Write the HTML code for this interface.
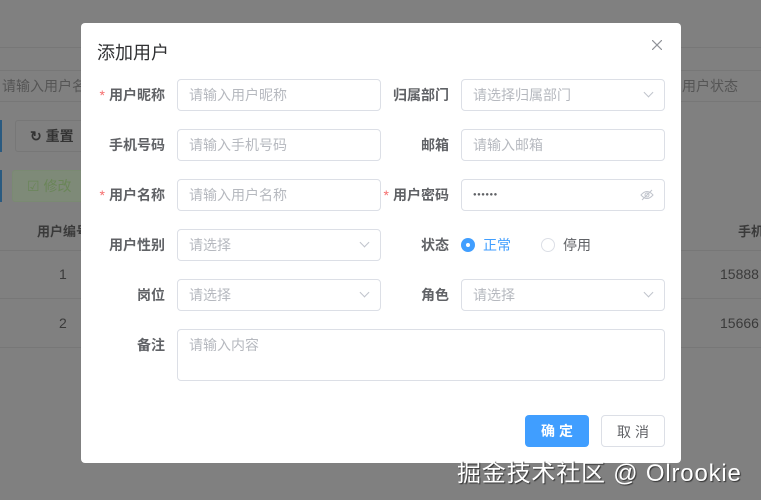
<!DOCTYPE html>
<html><head><meta charset="utf-8"><style>
*{box-sizing:border-box;margin:0;padding:0}
body{width:761px;height:500px;overflow:hidden;background:#808080;font-family:"Liberation Sans","Noto Sans CJK SC",sans-serif;position:relative;font-size:14px}
.a{position:absolute;white-space:nowrap}
.bg{color:#3a3a3a}
.dlg{position:absolute;left:81px;top:23px;width:600px;height:440px;background:#fff;border-radius:4px}
.ttl{position:absolute;left:16px;top:16px;font-size:18px;color:#303133}
.lb{position:absolute;width:90px;text-align:right;font-weight:bold;color:#606266;font-size:14px;line-height:32px}
.lb i{color:#f56c6c;font-style:normal;font-weight:normal;margin-right:4px}
.in{position:absolute;height:32px;border:1px solid #dcdfe6;border-radius:4px;color:#b6b9bf;padding-left:11px;line-height:30px;font-size:14px}
.ar{position:absolute;right:12px;top:9px;width:7px;height:7px;border-right:1px solid #c0c4cc;border-bottom:1px solid #c0c4cc;transform:rotate(45deg)}
.btn{position:absolute;top:392px;width:64px;height:32px;border-radius:4px;text-align:center;line-height:32px;font-size:14px;letter-spacing:4px;padding-left:4px}
</style></head><body>
<div class="a" style="left:0;top:47px;width:761px;height:1px;background:#777"></div>
<div class="a" style="left:0;top:70px;width:90px;height:32px;border:1px solid #777;border-left:none;color:#555;line-height:30px;padding-left:2px;overflow:hidden">请输入用户名</div>
<div class="a" style="left:680px;top:70px;width:81px;height:32px;border-top:1px solid #777;border-bottom:1px solid #777;color:#555;line-height:30px;padding-left:2px">用户状态</div>
<div class="a" style="left:0;top:120px;width:2px;height:32px;background:#2a5a80"></div>
<div class="a" style="left:15px;top:120px;width:70px;height:32px;border:1px solid #777;border-radius:3px;color:#333;line-height:30px;padding-left:14px;font-weight:bold">↻ 重置</div>
<div class="a" style="left:0;top:170px;width:2px;height:32px;background:#2a5a80"></div>
<div class="a" style="left:12px;top:170px;width:72px;height:32px;background:#7e8a78;border:1px solid #7a8a72;border-radius:3px;color:#6a8558;line-height:30px;padding-left:14px">☑ 修改</div>
<div class="a bg" style="left:37px;top:221px;font-weight:bold;font-size:13px">用户编号</div>
<div class="a bg" style="left:738px;top:221px;font-weight:bold;font-size:13px">手机</div>
<div class="a" style="left:0;top:250px;width:761px;height:1px;background:#777"></div>
<div class="a bg" style="left:59px;top:266px">1</div>
<div class="a bg" style="left:720px;top:266px">15888</div>
<div class="a" style="left:0;top:298px;width:761px;height:1px;background:#777"></div>
<div class="a bg" style="left:59px;top:315px">2</div>
<div class="a bg" style="left:720px;top:315px">15666</div>
<div class="a" style="left:0;top:347px;width:761px;height:1px;background:#777"></div>

<div class="dlg">
<div class="ttl">添加用户</div>
<svg class="a" style="left:571px;top:17px" width="10" height="10" viewBox="0 0 10 10"><path d="M0 0L10 10M10 0L0 10" stroke="#909399" stroke-width="1.2"/></svg>
<div class="lb" style="left:-6px;top:56px"><i>*</i>用户昵称</div>
<div class="in" style="left:96px;top:56px;width:204px">请输入用户昵称</div>
<div class="lb" style="left:278px;top:56px">归属部门</div>
<div class="in" style="left:380px;top:56px;width:204px">请选择归属部门<span class="ar"></span></div>

<div class="lb" style="left:-6px;top:106px">手机号码</div>
<div class="in" style="left:96px;top:106px;width:204px">请输入手机号码</div>
<div class="lb" style="left:278px;top:106px">邮箱</div>
<div class="in" style="left:380px;top:106px;width:204px">请输入邮箱</div>

<div class="lb" style="left:-6px;top:156px"><i>*</i>用户名称</div>
<div class="in" style="left:96px;top:156px;width:204px">请输入用户名称</div>
<div class="lb" style="left:278px;top:156px"><i>*</i>用户密码</div>
<div class="in" style="left:380px;top:156px;width:204px;color:#606266;font-size:6px;letter-spacing:0.5px">●●●●●●<svg style="position:absolute;right:10px;top:9px" width="14" height="12" viewBox="0 0 14 12"><path d="M1 6Q7 -1 13 6Q7 13 1 6Z" fill="none" stroke="#c0c4cc"/><circle cx="7" cy="6" r="2" fill="none" stroke="#c0c4cc"/><path d="M2 11L12 1" stroke="#c0c4cc"/></svg></div>

<div class="lb" style="left:-6px;top:206px">用户性别</div>
<div class="in" style="left:96px;top:206px;width:204px">请选择<span class="ar"></span></div>
<div class="lb" style="left:278px;top:206px">状态</div>
<div class="a" style="left:380px;top:215px;width:14px;height:14px;border-radius:50%;background:#409eff"><div class="a" style="left:5px;top:5px;width:4px;height:4px;border-radius:50%;background:#fff"></div></div>
<div class="a" style="left:402px;top:212px;color:#409eff">正常</div>
<div class="a" style="left:460px;top:215px;width:14px;height:14px;border-radius:50%;border:1px solid #dcdfe6"></div>
<div class="a" style="left:482px;top:212px;color:#606266">停用</div>

<div class="lb" style="left:-6px;top:256px">岗位</div>
<div class="in" style="left:96px;top:256px;width:204px">请选择<span class="ar"></span></div>
<div class="lb" style="left:278px;top:256px">角色</div>
<div class="in" style="left:380px;top:256px;width:204px">请选择<span class="ar"></span></div>

<div class="lb" style="left:-6px;top:306px">备注</div>
<div class="in" style="left:96px;top:306px;width:488px;height:52px;line-height:20px;padding-top:5px">请输入内容</div>

<div class="btn" style="left:444px;background:#409eff;color:#fff;font-weight:bold">确定</div>
<div class="btn" style="left:520px;border:1px solid #dcdfe6;color:#606266">取消</div>
</div>
<div class="a" style="left:457px;top:453px;font-size:24px;color:#fff;text-shadow:1px 1px 1px #333;letter-spacing:0.8px">掘金技术社区 @ Olrookie</div>
</body></html>
